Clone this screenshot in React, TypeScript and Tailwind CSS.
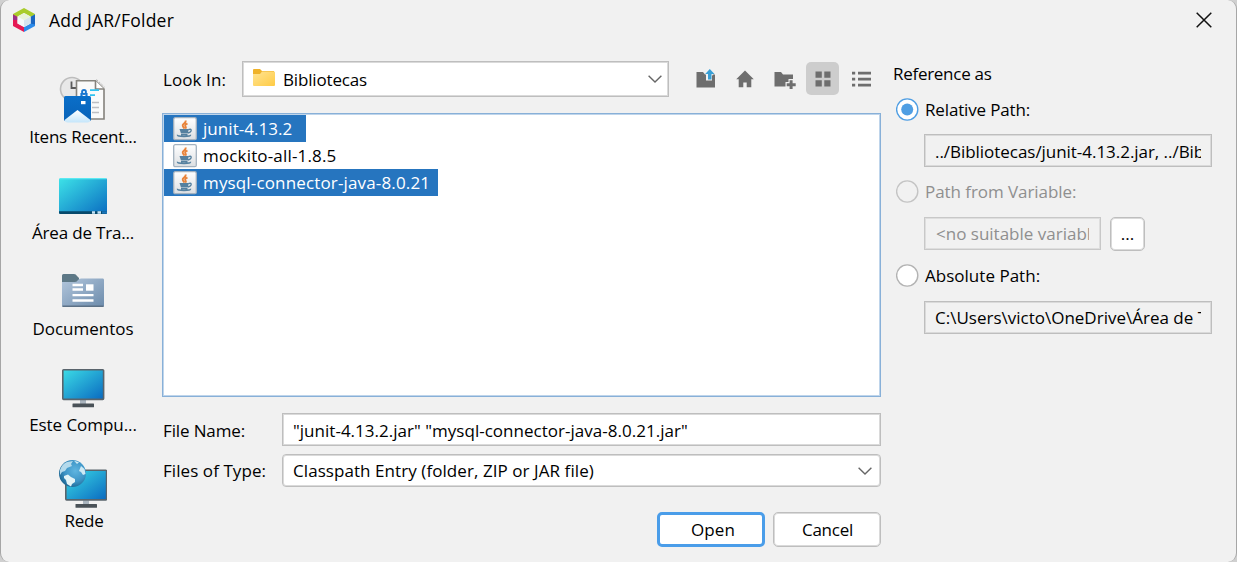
import type { ReactNode } from "react";

function AppLogo() {
  return (
    <svg width="22" height="24" viewBox="0 0 22 24">
      <path d="M11 0 L22 6 L22 7 L17 9.5 L11 6 L5 9.5 L0 7 L0 6 Z" fill="#a9cc2c" />
      <path d="M0 6.5 L4.5 9 L4.5 15.5 L11 19 L11 24 L0 18 Z" fill="#e51a54" />
      <path d="M0 6.5 L4.5 9 L4.5 12 L0 12 Z" fill="#9a2f86" />
      <path d="M22 6.5 L17.5 9 L17.5 15.5 L11 19 L11 24 L22 18 Z" fill="#2d8bea" />
      <path d="M22 6.5 L17.5 9 L17.5 15.5 L22 16.5 Z" fill="#1b66c0" />
      <path d="M11 5 L17.5 8.5 L17.5 15.5 L11 19 L4.5 15.5 L4.5 8.5 Z" fill="#f4f8fa" />
      <path d="M11 12 L17.5 8.5 L17.5 15.5 L11 19 Z" fill="#d5e4ef" />
      <path d="M11 5 L17.5 8.5 L11 12 L4.5 8.5 Z" fill="#e9f3d8" />
    </svg>
  );
}

function RecentIcon() {
  return (
    <svg width="48" height="48" viewBox="0 0 48 48">
      <defs>
        <linearGradient id="photo" x1="0" y1="0" x2="0" y2="1">
          <stop offset="0" stopColor="#0a6fc9" />
          <stop offset="1" stopColor="#0862b8" />
        </linearGradient>
        <linearGradient id="hill" x1="0" y1="0" x2="0" y2="1">
          <stop offset="0" stopColor="#ffffff" />
          <stop offset="1" stopColor="#c5e6fb" />
        </linearGradient>
      </defs>
      <circle cx="13" cy="13" r="11.5" fill="#e8e8e8" stroke="#bdbdbd" strokeWidth="1.6" />
      <path d="M12.5 5.5 V12 H17" fill="none" stroke="#5a5a5a" strokeWidth="1.8" />
      <path d="M17.5 4.8 H36.5 L45 13 V43 H17.5 Z" fill="#fafafa" stroke="#85837d" strokeWidth="1.6" />
      <path d="M36.5 4.8 V13 H45" fill="#fff" stroke="#85837d" strokeWidth="1.6" />
      <path d="M37.5 3.5 L45.5 11" stroke="#b4b4b4" strokeWidth="1" strokeDasharray="2 1.3" />
      <path d="M31 14.2 H40 M31 19.2 H36" stroke="#33c3f0" strokeWidth="1.8" />
      <path d="M33 26.5 H40 M33 31.5 H40 M33 36.5 H40" stroke="#bdbec2" strokeWidth="1.6" />
      <path d="M22.5 20 V17 M27.5 20 V17" stroke="#1976d0" strokeWidth="2.2" />
      <circle cx="25" cy="16" r="2" fill="none" stroke="#1976d0" strokeWidth="1.8" />
      <rect x="5" y="20" width="27" height="25" rx="1.5" fill="url(#photo)" />
      <path d="M5.5 44 L18.5 34 L31.5 44 Q31 46.5 28.5 46.5 H8.5 Q6 46.5 5.5 44 Z" fill="url(#hill)" />
      <rect x="22" y="25" width="4.5" height="3.2" fill="#fff" />
    </svg>
  );
}

function DesktopIcon() {
  return (
    <svg width="48" height="48" viewBox="0 0 48 48">
      <defs>
        <linearGradient id="desk" x1="0" y1="0" x2="1" y2="1">
          <stop offset="0" stopColor="#3de3e8" />
          <stop offset="1" stopColor="#0a6cc1" />
        </linearGradient>
      </defs>
      <rect x="0" y="6" width="48" height="36" rx="1.6" fill="url(#desk)" />
      <path d="M1 6.6 H47" stroke="#5ce9f2" strokeWidth="1.2" />
      <path d="M0 39.3 H48 V40.4 Q48 42 46.4 42 H1.6 Q0 42 0 40.4 Z" fill="#07496b" />
      <path d="M33 40.5 h3 M38.5 40.5 h3.5" stroke="#c5e4f8" strokeWidth="2.4" />
      <path d="M43 40.5 h5" stroke="#1a74b8" strokeWidth="2.4" />
    </svg>
  );
}

function DocumentsIcon() {
  return (
    <svg width="48" height="48" viewBox="0 0 48 48">
      <defs>
        <linearGradient id="docs" x1="0" y1="0" x2="1" y2="1">
          <stop offset="0" stopColor="#b2c6dc" />
          <stop offset="1" stopColor="#6c8bab" />
        </linearGradient>
      </defs>
      <path d="M3 7.5 Q3 6 4.5 6 H15 Q17 6 18 8 L20 10 V16 H3 Z" fill="#5d7886" />
      <path d="M3 14 H16 Q18 14 19 12 Q20 10.5 22 10.5 H44 Q45 10.5 45 12 V37.5 Q45 39 43.5 39 H4.5 Q3 39 3 37.5 Z" fill="url(#docs)" />
      <path d="M3.5 38.3 H44.5" stroke="#5c7186" strokeWidth="1.5" />
      <path d="M13.5 17 H24 M13.5 21.5 H24 M13.5 27.2 H34.5 M13.5 32.5 H34.5" stroke="#fff" strokeWidth="2.3" />
      <rect x="27" y="16.3" width="7.5" height="6.4" fill="#fff" />
    </svg>
  );
}

function Monitor({ x = 0, y = 0 }: { x?: number; y?: number }) {
  return (
    <g transform={`translate(${x} ${y})`}>
      <rect x="21" y="32" width="6" height="6" fill="#aab5bf" />
      <rect x="3.8" y="1.8" width="40.8" height="29.6" rx="0.8" fill="url(#screen)" stroke="#59646c" strokeWidth="1.6" />
      <rect x="13.5" y="35.6" width="21.5" height="3.6" rx="0.5" fill="#4a5258" />
    </g>
  );
}

function ComputerIcon({ globe = false }: { globe?: boolean }) {
  return (
    <svg width="48" height="48" viewBox="0 0 48 48">
      <defs>
        <linearGradient id="screen" x1="0" y1="0" x2="1" y2="1">
          <stop offset="0" stopColor="#3bdce6" />
          <stop offset="1" stopColor="#0a69c0" />
        </linearGradient>
        <radialGradient id="globe" cx="0.6" cy="0.4" r="0.65">
          <stop offset="0" stopColor="#5fb5e0" />
          <stop offset="0.6" stopColor="#3d94c6" />
          <stop offset="1" stopColor="#1c6591" />
        </radialGradient>
      </defs>
      <Monitor x={globe ? 3 : 0} y={globe ? 8.5 : 4} />
      {globe && (
        <>
          <circle cx="13.5" cy="13.5" r="13.5" fill="url(#globe)" />
          <path d="M1 10 Q3 4 8 2 L14 1 L12 4 L13 6 L8 8 L6 11 L3 12 L1 15 Z" fill="#b4daec" />
          <path d="M15 .8 L20 2.2 L18 4 Z M22 6 L25.5 9 L26.5 14 L24 15 L22 12 L20 11 Z" fill="#cde9f4" />
          <path d="M5 16 L9 14.5 L12 17 L16 19 L16 22 L13 24 L12 26.5 L8 24 L7 20 L5 18 Z" fill="#e3f3f6" />
        </>
      )}
    </svg>
  );
}

function JarIcon() {
  return (
    <svg width="24" height="24" viewBox="0 0 24 24" className="shrink-0">
      <defs>
        <linearGradient id="jar" x1="0" y1="0" x2="0" y2="1">
          <stop offset="0" stopColor="#ffffff" />
          <stop offset="1" stopColor="#dcdfe2" />
        </linearGradient>
      </defs>
      <rect x="0.7" y="0.7" width="22.6" height="22" rx="1.5" fill="url(#jar)" stroke="#a4b2bf" strokeWidth="1.3" />
      <path d="M12.8 3.5 Q13 5.5 10.5 7 Q8.5 8.5 11.5 11.5 M14.5 6.7 Q11 8 12.6 9.7 Q13.3 10.5 12.4 11.7" fill="none" stroke="#e8833a" strokeWidth="1.9" />
      <path d="M6.5 12 H15.8 L14.8 16.5 H8 Z" fill="#55809f" />
      <path d="M15.3 12.6 Q18.8 11.4 18 14 Q17.4 15.5 15 16 M4.6 17.8 Q4 19.5 11 19.5 Q18 19.5 17.4 17.8 M8 17.8 H14.5" fill="none" stroke="#55809f" strokeWidth="1.5" />
    </svg>
  );
}

function FolderIcon() {
  return (
    <svg width="22" height="18" viewBox="0 0 22 18" className="mb-[3px] shrink-0">
      <defs>
        <linearGradient id="folder" x1="0" y1="0" x2="1" y2="1">
          <stop offset="0" stopColor="#ffe494" />
          <stop offset="1" stopColor="#ffcb44" />
        </linearGradient>
      </defs>
      <path d="M0 1 Q0 0 1 0 H7 L9 2 H21 V6 H0 Z" fill="#efb22a" />
      <path d="M0 5 H7 L9 2.5 H21 Q22 2.5 22 3.5 V16 Q22 17 21 17 H1 Q0 17 0 16 Z" fill="url(#folder)" />
    </svg>
  );
}

function Chevron() {
  return (
    <svg width="14" height="8" viewBox="0 0 14 8" className="shrink-0">
      <path d="M0.6 0.8 L7 7 L13.4 0.8" fill="none" stroke="#666" strokeWidth="1.4" />
    </svg>
  );
}

function Toolbar() {
  return (
    <div className="mb-px flex h-[34px] items-center">
      <svg width="20" height="20" viewBox="0 0 20 20" className="ml-[26.5px]">
        <path d="M0.5 3 H7 L9 5.5 H10 V11.5 H16 V7 L17 5.5 H19 V18.5 H0.5 Z" fill="#6e6e6e" />
        <path d="M13.8 0 L18.5 5 H15.5 V10.5 H12 V5 H9.2 Z" fill="#389fd6" />
      </svg>
      <svg width="18" height="18" viewBox="0 0 18 18" className="ml-5">
        <path d="M9 0.5 L17.8 9.3 H15.3 V17.3 H10.7 V12.5 H7.3 V17.3 H2.7 V9.3 H0.2 Z" fill="#6e6e6e" />
      </svg>
      <svg width="22" height="20" viewBox="0 0 22 20" className="ml-5">
        <path d="M0.5 3 H7 L9 5.5 H19 V10 H14.5 V13 H11.5 V17.5 H0.5 Z" fill="#6e6e6e" />
        <path d="M15.6 11.3 H18.6 V14.2 H21.7 V17.2 H18.6 V20 H15.6 V17.2 H12.7 V14.2 H15.6 Z" fill="#6e6e6e" />
      </svg>
      <div className="ml-[10.5px] flex h-[33px] w-[33px] items-center justify-center rounded-[5px] bg-[#cdcdcd]">
        <svg width="16" height="16" viewBox="0 0 16 16" className="mt-px">
          <path d="M0.5 0.5 h6.3 v6.3 h-6.3 z M9.3 0.5 h6.2 v6.3 h-6.2 z M0.5 9.3 h6.3 v6.2 h-6.3 z M9.3 9.3 h6.2 v6.2 h-6.2 z" fill="#6e6e6e" />
        </svg>
      </div>
      <svg width="19" height="16" viewBox="0 0 19 16" className="mt-px ml-[13px]">
        <path d="M0 .7 h3.2 v2.7 H0 z M6 .7 h13 v2.7 H6 z M0 6.7 h3.2 v2.7 H0 z M6 6.7 h13 v2.7 H6 z M0 12.7 h3.2 v2.7 H0 z M6 12.7 h13 v2.7 H6 z" fill="#6e6e6e" />
      </svg>
    </div>
  );
}

function Place({ icon, children }: { icon: ReactNode; children: ReactNode }) {
  return (
    <div className="flex h-24 flex-col items-center">
      {icon}
      <div className="mt-px flex h-6 items-center whitespace-nowrap">{children}</div>
    </div>
  );
}

function Radio({ state }: { state: "on" | "off" | "disabled" }) {
  const color = state === "on" ? "border-[#4f9ee3] bg-white" : state === "off" ? "border-[#b5b5b5] bg-white" : "border-[#c4c4c4] bg-[#f2f2f2]";
  return (
    <svg width="23" height="23" viewBox="0 0 23 23" className="mb-px shrink-0">
      <circle
        cx="11.2"
        cy="11.5"
        r="10.6"
        strokeWidth="1.4"
        fill={state === "disabled" ? "#f1f1f1" : "#fff"}
        stroke={state === "on" ? "#4f9ee3" : state === "off" ? "#b3b3b3" : "#c4c4c4"}
      />
      {state === "on" && <circle cx="11.2" cy="11.5" r="6" fill="#4f9ee3" />}
    </svg>
  );
}

export default function App() {
  return (
    <div className="h-[562px] w-[1237px] overflow-hidden bg-[#d0d0d0] font-['Open_Sans','Noto_Sans',sans-serif] text-[17px] leading-6 text-black">
      <div className="flex h-full flex-col rounded-[9px] border-x border-[#a6a6a6] bg-[#f1f1f1]">
        <header className="flex h-[40px] shrink-0 items-center pl-3">
          <AppLogo />
          <h1 className="ml-[14px] text-[17.5px] tracking-[0.24px]">Add JAR/Folder</h1>
          <svg width="16" height="16" viewBox="0 0 16 16" className="mr-[24px] ml-auto">
            <path d="M0.7 0.7 L15.3 15.3 M15.3 0.7 L0.7 15.3" stroke="#111" strokeWidth="1.5" />
          </svg>
        </header>
        <div className="flex min-h-0 flex-1 pt-[2px]">
          <nav className="flex w-[161px] shrink-0 flex-col pt-[34px] pl-[3px]">
            <Place icon={<RecentIcon />}><span className="tracking-[-0.22px]">Itens Recent...</span></Place>
            <Place icon={<DesktopIcon />}><span className="tracking-[-0.19px]">Área de Tra...</span></Place>
            <Place icon={<DocumentsIcon />}><span>Documentos</span></Place>
            <Place icon={<ComputerIcon />}><span className="tracking-[-0.06px]">Este Compu...</span></Place>
            <Place icon={<ComputerIcon globe />}><span className="pl-[2px] tracking-[-0.2px]">Rede</span></Place>
          </nav>
          <main className="flex w-[719px] shrink-0 flex-col pt-[19px]">
            <div className="flex h-9 items-center">
              <label className="w-20 shrink-0 pt-px pl-px tracking-[0.09px]">Look In:</label>
              <div className="flex h-9 w-[427px] shrink-0 items-center border border-[#bebebe] bg-white pr-[6px] pl-[10px] shadow-[inset_0_0_0_1px_#dadada]">
                <FolderIcon />
                <span className="ml-[8px] flex-1 pt-px tracking-[-0.16px]">Bibliotecas</span>
                <Chevron />
              </div>
              <Toolbar />
            </div>
            <div className="mt-4 flex h-[284px] shrink-0 flex-col items-start border border-[#88b0d8] bg-white p-px shadow-[inset_0_0_0_1px_#bfd5eb]">
              <div className="flex h-[27px] w-[142px] items-center bg-[#2675bf] pl-[9px] text-white">
                <JarIcon /><span className="ml-[6px] tracking-[0.05px]">junit-4.13.2</span>
              </div>
              <div className="flex h-[27px] items-center pl-[9px]">
                <JarIcon /><span className="ml-[6px] tracking-[0.16px]">mockito-all-1.8.5</span>
              </div>
              <div className="flex h-[27px] w-[274px] items-center bg-[#2675bf] pl-[9px] whitespace-nowrap text-white">
                <JarIcon /><span className="ml-[6px] tracking-[0.15px]">mysql-connector-java-8.0.21</span>
              </div>
            </div>
            <div className="mt-4 flex h-[33px] shrink-0 items-center">
              <label className="w-[120px] shrink-0 pt-[2px] pl-px tracking-[-0.13px]">File Name:</label>
              <div className="flex h-full flex-1 items-center border border-[#bebebe] bg-white pt-[2px] pl-[10px] tracking-[0.02px] shadow-[inset_0_0_0_1px_#dadada]">
                "junit-4.13.2.jar" "mysql-connector-java-8.0.21.jar"
              </div>
            </div>
            <div className="mt-[8px] flex h-[33px] shrink-0 items-center">
              <label className="w-[120px] shrink-0 pl-px tracking-[0.07px]">Files of Type:</label>
              <div className="flex h-full flex-1 items-center rounded-[4px] border border-[#bebebe] bg-white pr-[8px] pl-[10px] shadow-[inset_0_0_0_1px_#dadada]">
                <span className="flex-1 tracking-[0.07px]">Classpath Entry (folder, ZIP or JAR file)</span>
                <Chevron />
              </div>
            </div>
            <div className="mt-[25px] flex h-[35px] shrink-0 justify-end gap-2">
              <button className="w-[108px] rounded-[5px] border-3 border-[#4a9de9] bg-white pl-[4px] tracking-[0.1px]">Open</button>
              <button className="w-[108px] rounded-[5px] border border-[#bebebe] bg-white pl-px tracking-[-0.26px] shadow-[inset_0_0_0_1px_#dadada]">Cancel</button>
            </div>
          </main>
          <aside className="flex flex-col pt-[20px] pl-[12px]">
            <h2 className="tracking-[-0.28px]">Reference as</h2>
            <div className="mt-[12px] ml-[3px] flex h-6 items-center gap-[6px]">
              <Radio state="on" /><span className="tracking-[-0.15px]">Relative Path:</span>
            </div>
            <div className="mt-[12px] ml-[31px] flex h-[33px] w-[288px] items-center border border-[#bebebe] px-[10px] pt-[2px] shadow-[inset_0_0_0_1px_#dadada]">
              <span className="w-full overflow-hidden whitespace-nowrap tracking-[-0.04px]">../Bibliotecas/junit-4.13.2.jar, ../Bibliotecas</span>
            </div>
            <div className="mt-[13px] ml-[3px] flex h-6 items-center gap-[6px] text-[#8f8f8f]">
              <Radio state="disabled" /><span className="tracking-[-0.06px]">Path from Variable:</span>
            </div>
            <div className="mt-[13px] ml-[31px] flex h-[34px] items-start">
              <div className="flex h-[33px] w-[177px] items-center border border-[#c8c8c8] px-[11px] text-[#8f8f8f] shadow-[inset_0_0_0_1px_#dedede]">
                <span className="w-full overflow-hidden whitespace-nowrap">&lt;no suitable variable&gt;</span>
              </div>
              <button className="ml-[9px] h-[34px] w-[35px] rounded-[5px] border border-[#bebebe] bg-white shadow-[inset_0_0_0_1px_#dadada]">...</button>
            </div>
            <div className="mt-[13px] ml-[3px] flex h-6 items-center gap-[6px]">
              <Radio state="off" /><span className="tracking-[0.02px]">Absolute Path:</span>
            </div>
            <div className="mt-[13px] ml-[31px] flex h-[33px] w-[288px] items-center border border-[#bebebe] px-[10px] shadow-[inset_0_0_0_1px_#dadada]">
              <span className="w-full overflow-hidden whitespace-nowrap">C:\Users\victo\OneDrive\Área de Trabalho</span>
            </div>
          </aside>
        </div>
      </div>
    </div>
  );
}
